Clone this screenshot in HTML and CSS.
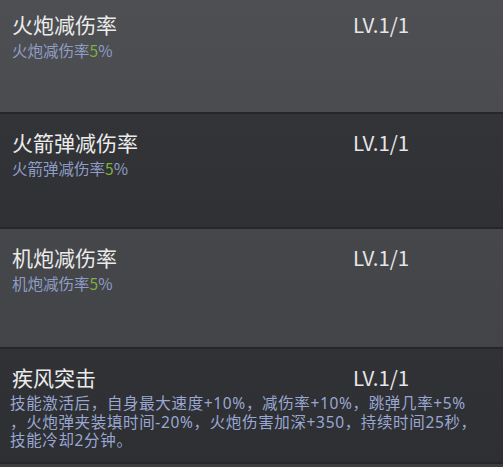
FILE: index.html
```html
<!DOCTYPE html>
<html lang="zh">
<head>
<meta charset="utf-8">
<link rel="stylesheet" href="styles.css">
</head>
<body>
<div class="list">
  <section class="panel panel-a">
    <div class="head"><span class="title">火炮减伤率</span><span class="lv">LV.1/1</span></div>
    <div class="desc">火炮减伤率<span class="num">5</span>%</div>
  </section>
  <section class="panel panel-b">
    <div class="head"><span class="title">火箭弹减伤率</span><span class="lv">LV.1/1</span></div>
    <div class="desc">火箭弹减伤率<span class="num">5</span>%</div>
  </section>
  <section class="panel panel-c">
    <div class="head"><span class="title">机炮减伤率</span><span class="lv">LV.1/1</span></div>
    <div class="desc">机炮减伤率<span class="num">5</span>%</div>
  </section>
  <section class="panel panel-d">
    <div class="head"><span class="title">疾风突击</span><span class="lv">LV.1/1</span></div>
    <div class="desc long">
      <div class="line">技能激活后，自身最大速度+10%，减伤率+10%，跳弹几率+5%</div>
      <div class="line">，火炮弹夹装填时间-20%，火炮伤害加深+350，持续时间25秒，</div>
      <div class="line">技能冷却2分钟。</div>
    </div>
  </section>
</div>
</body>
</html>
```
FILE: styles.css
```css
html, body {
  margin: 0;
  padding: 0;
}
body {
  width: 503px;
  height: 467px;
  overflow: hidden;
  background: #3a3c3e;
  font-family: "Noto Sans CJK SC", "Noto Sans", sans-serif;
}
.list {
  margin-top: -4px;
  display: flex;
  flex-direction: column;
}
.panel {
  box-sizing: border-box;
  padding: 16px 0 0 12px;
  border-bottom: 2px solid #25272a;
}
.panel-a {
  height: 118px;
  background: linear-gradient(180deg, #4d4f52 0%, #4a4c4f 100%);
}
.panel-b {
  height: 115px;
  background: linear-gradient(180deg, #323437 0%, #2f3134 100%);
}
.panel-c {
  height: 120px;
  background: linear-gradient(180deg, #45474a 0%, #424447 100%);
}
.panel-d {
  height: 115px;
  background: linear-gradient(180deg, #303235 0%, #2d2f32 100%);
}
.head {
  display: grid;
  grid-template-columns: 341px auto;
  align-items: baseline;
  line-height: 24px;
}
.title {
  font-size: 21px;
  color: #ebebeb;
}
.lv {
  font-size: 20.5px;
  color: #e6e6e6;
}
.desc {
  margin-top: 5px;
  font-size: 15.5px;
  line-height: 18.5px;
  color: #8f9dc6;
}
.desc.long {
  margin-left: -2px;
  font-family: "Noto Sans", "Noto Sans CJK SC", sans-serif;
  letter-spacing: 0.65px;
  color: #9aa7d2;
}
.line {
  height: 18.5px;
  white-space: nowrap;
}
.num {
  color: #7db03c;
}
```
